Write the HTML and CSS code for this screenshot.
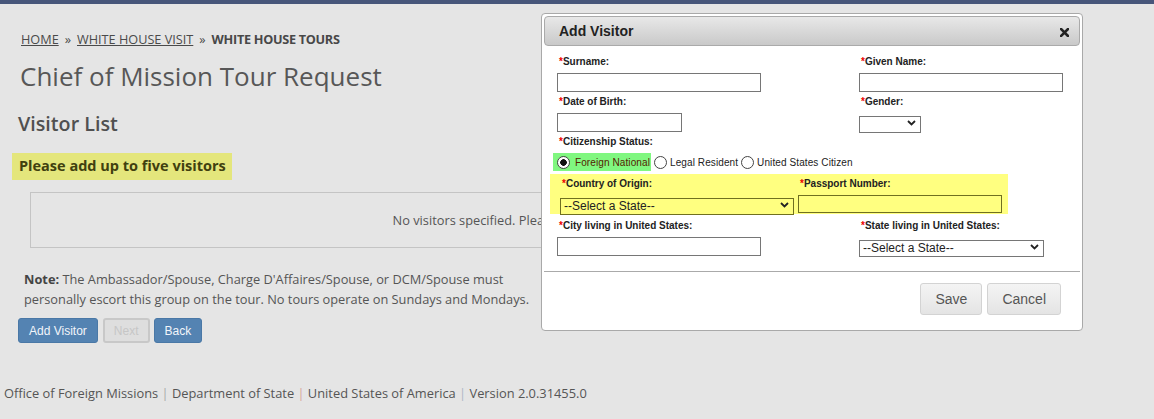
FILE: index.html
```
<!DOCTYPE html>
<html lang="en">
<head>
    <meta charset="UTF-8">
    <title>Chief of Mission Tour Request</title>
    <link rel="stylesheet" href="styles.css">
</head>
<body>
    <div class="topbar"></div>
    <div class="page">
        <div class="breadcrumb">
            <a href="#">HOME</a><span class="crumb-sep">&raquo;</span><a href="#">WHITE HOUSE VISIT</a><span class="crumb-sep">&raquo;</span><strong>WHITE HOUSE TOURS</strong>
        </div>
        <h1 class="page-title">Chief of Mission Tour Request</h1>
        <h2 class="section-title">Visitor List</h2>
        <div class="notice">Please add up to five visitors</div>
        <div class="visitor-box">No visitors specified. Please click Add Visitor to begin.</div>
        <p class="note"><strong>Note:</strong> The Ambassador/Spouse, Charge D'Affaires/Spouse, or DCM/Spouse must personally escort this group on the tour. No tours operate on Sundays and Mondays.</p>
        <div class="actions">
            <button class="btn btn-primary">Add Visitor</button>
            <button class="btn btn-disabled" disabled>Next</button>
            <button class="btn btn-primary">Back</button>
        </div>
    </div>
    <div class="footer">
        Office of Foreign Missions <span class="pipe">|</span> Department of State <span class="pipe pipe-red">|</span> United States of America <span class="pipe pipe-blue">|</span> Version 2.0.31455.0
    </div>

    <div class="dialog">
        <div class="dialog-titlebar">
            <span class="dialog-title">Add Visitor</span>
            <span class="dialog-close">
                <svg width="9" height="9" viewBox="0 0 9 9"><path d="M1 1L8 8M8 1L1 8" stroke="#222" stroke-width="2.6" stroke-linecap="square"/></svg>
            </span>
        </div>
        <div class="dialog-body">
            <div class="form-grid">
                <div class="field">
                    <label><span class="req">*</span>Surname:</label>
                    <input type="text" class="text-input w-204">
                </div>
                <div class="field">
                    <label><span class="req">*</span>Given Name:</label>
                    <input type="text" class="text-input w-204">
                </div>
                <div class="field">
                    <label><span class="req">*</span>Date of Birth:</label>
                    <input type="text" class="text-input w-125">
                </div>
                <div class="field">
                    <label><span class="req">*</span>Gender:</label>
                    <span class="select-wrap w-62 short">
                        <select class="select-input"><option></option></select>
                        <svg class="chevron" width="9" height="6" viewBox="0 0 9 6"><path d="M1 1L4.5 4.5L8 1" fill="none" stroke="#222" stroke-width="1.8"/></svg>
                    </span>
                </div>
                <div class="field field-full">
                    <label><span class="req">*</span>Citizenship Status:</label>
                    <div class="radio-row">
                        <label class="radio-option selected"><input type="radio" name="cit" checked><span>Foreign National</span></label>
                        <label class="radio-option"><input type="radio" name="cit"><span>Legal Resident</span></label>
                        <label class="radio-option"><input type="radio" name="cit"><span>United States Citizen</span></label>
                    </div>
                </div>
            </div>

            <div class="highlight-row">
                <div class="field">
                    <label><span class="req">*</span>Country of Origin:</label>
                    <span class="select-wrap w-234">
                        <select class="select-input"><option>--Select a State--</option></select>
                        <svg class="chevron" width="9" height="6" viewBox="0 0 9 6"><path d="M1 1L4.5 4.5L8 1" fill="none" stroke="#222" stroke-width="1.8"/></svg>
                    </span>
                </div>
                <div class="field">
                    <label><span class="req">*</span>Passport Number:</label>
                    <input type="text" class="text-input w-204">
                </div>
            </div>

            <div class="form-grid city-row">
                <div class="field">
                    <label><span class="req">*</span>City living in United States:</label>
                    <input type="text" class="text-input w-204">
                </div>
                <div class="field">
                    <label><span class="req">*</span>State living in United States:</label>
                    <span class="select-wrap w-185 short">
                        <select class="select-input"><option>--Select a State--</option></select>
                        <svg class="chevron" width="9" height="6" viewBox="0 0 9 6"><path d="M1 1L4.5 4.5L8 1" fill="none" stroke="#222" stroke-width="1.8"/></svg>
                    </span>
                </div>
            </div>
        </div>
        <div class="dialog-buttons">
            <button class="dlg-btn">Save</button>
            <button class="dlg-btn">Cancel</button>
        </div>
    </div>
</body>
</html>
```

FILE: styles.css
```
body {
    margin: 0;
    background-color: #e5e5e5;
    font-family: "Open Sans", sans-serif;
    color: #555;
}
.topbar {
    height: 4px;
    background-color: #47567a;
}
.page {
    padding: 0 18px;
}
.breadcrumb {
    margin: 26px 0 0 3px;
    font-size: 12.7px;
    line-height: 18px;
    color: #4a4a4a;
}
.breadcrumb a {
    color: #4a4a4a;
}
.breadcrumb strong {
    color: #484848;
    letter-spacing: -0.3px;
}
.crumb-sep {
    margin: 0 6px;
}
.page-title {
    margin: 13px 0 0 2px;
    font-size: 26px;
    font-weight: normal;
    line-height: 30px;
    color: #575757;
}
.section-title {
    margin: 21px 0 0;
    font-size: 19.7px;
    font-weight: 600;
    line-height: 24px;
    color: #505050;
}
.notice {
    display: inline-block;
    margin: 17px 0 0 -6px;
    padding: 0 6px 2px 7px;
    height: 25px;
    line-height: 25px;
    font-size: 14.5px;
    font-weight: bold;
    color: #40400f;
    background-color: #e4e67c;
}
.visitor-box {
    width: 1040px;
    margin: 12px 0 0 12px;
    height: 54px;
    border: 1px solid #c4c4c4;
    display: flex;
    align-items: center;
    justify-content: center;
    font-size: 12.8px;
}
.note {
    width: 520px;
    margin: 21px 0 0 6px;
    font-size: 12.8px;
    line-height: 20px;
}
.note strong {
    color: #444;
}
.actions {
    display: flex;
    gap: 5px;
    margin-top: 9px;
}
.btn {
    height: 25px;
    padding: 0 10px;
    border: 1px solid #4a78a6;
    border-radius: 3px;
    font-family: "Liberation Sans", Arial, sans-serif;
    font-size: 12px;
    cursor: pointer;
}
.btn-primary {
    background-color: #5483b2;
    color: #f2f5fa;
}
.btn-disabled {
    margin-right: -1px;
    padding: 0 9px;
    border: 2px solid #c8c8c8;
    background-color: #dedede;
    color: #c6c6c6;
}
.footer {
    margin-top: 41px;
    padding-left: 4px;
    font-size: 12.85px;
    line-height: 18px;
    color: #555;
}
.pipe {
    color: #a8a8a8;
}
.pipe-red {
    color: #d8a49a;
}
.pipe-blue {
    color: #aeb6c6;
}

/* dialog */
.dialog {
    position: absolute;
    left: 541px;
    top: 13px;
    width: 536px;
    padding: 2px;
    border: 1px solid #a9a9a9;
    border-radius: 4px;
    background-color: #fff;
    font-family: "Liberation Sans", Arial, sans-serif;
    color: #222;
}
.dialog-titlebar {
    height: 28px;
    border: 1px solid #aaa;
    border-radius: 4px;
    background: linear-gradient(#e8e8e8, #c9c9c9);
    display: flex;
    align-items: center;
    justify-content: space-between;
    padding: 0 10px 0 14px;
}
.dialog-title {
    font-size: 14px;
    font-weight: bold;
}
.dialog-close {
    display: flex;
    margin-top: 2px;
}
.dialog-body {
    padding: 10px 0 15px 13px;
}
.form-grid {
    display: grid;
    grid-template-columns: 302px 1fr;
    row-gap: 4px;
}
.field {
    display: flex;
    flex-direction: column;
    align-items: flex-start;
}
.field-full {
    grid-column: 1 / 3;
}
.field > label {
    font-size: 10px;
    font-weight: bold;
    line-height: 12px;
    padding-left: 2px;
    margin-bottom: 5px;
}
.req {
    color: #e00;
}
.text-input {
    box-sizing: border-box;
    height: 19px;
    margin: 0;
    padding: 0 3px;
    border: 1px solid #767676;
    background-color: #fff;
    font-size: 12px;
}
.w-204 { width: 204px; }
.w-125 { width: 125px; }
.w-62 { width: 62px; }
.w-185 { width: 185px; }
.w-234 { width: 234px; }
.select-wrap {
    position: relative;
    display: block;
    height: 17px;
}
.select-wrap.short {
    margin-top: 1px;
}
.select-input {
    appearance: none;
    box-sizing: border-box;
    width: 100%;
    height: 17px;
    margin: 0;
    padding: 0 3px;
    border: 1px solid #767676;
    border-radius: 0;
    background-color: #fff;
    font-family: "Liberation Sans", Arial, sans-serif;
    font-size: 12px;
    line-height: 15px;
    color: #222;
}
.chevron {
    position: absolute;
    right: 5px;
    top: 6px;
}
.radio-row {
    display: flex;
    height: 18px;
}
.radio-option {
    display: flex;
    align-items: center;
    margin-left: 3px;
    font-size: 10px;
    letter-spacing: 0.1px;
    color: #222;
}
.radio-option.selected {
    margin-left: -4px;
    padding: 0 1px 0 4px;
    background-color: #80f780;
    color: #552200;
}
.radio-option input {
    appearance: none;
    width: 13px;
    height: 13px;
    margin: 0 3px 0 0;
    border: 1px solid #444;
    border-radius: 50%;
    background-color: #fff;
}
.radio-option.selected input {
    margin-right: 5px;
}
.radio-option input:checked {
    background: radial-gradient(circle, #111 0 3px, #fff 3.6px);
}
.highlight-row {
    display: grid;
    grid-template-columns: 234px 204px;
    column-gap: 4px;
    width: 442px;
    margin: 3px 0 0 -7px;
    padding: 4px 6px 1px 10px;
    background-color: #ffff80;
}
.highlight-row .field > label {
    margin-bottom: 6px;
}
.highlight-row .text-input,
.highlight-row .select-input {
    border-color: #707020;
    background-color: #ffff80;
}
.highlight-row .text-input {
    height: 18px;
    margin-top: -1px;
}
.city-row {
    margin-top: 6px;
}
.dialog-buttons {
    display: flex;
    justify-content: flex-end;
    gap: 5px;
    padding: 11px 19px 13px;
    border-top: 1px solid #aaa;
}
.dlg-btn {
    height: 32px;
    padding: 0 14px;
    border: 1px solid #d3d3d3;
    border-radius: 3px;
    background: linear-gradient(#f4f4f4, #e4e4e4);
    font-family: "Liberation Sans", Arial, sans-serif;
    font-size: 14px;
    color: #555;
}
```
